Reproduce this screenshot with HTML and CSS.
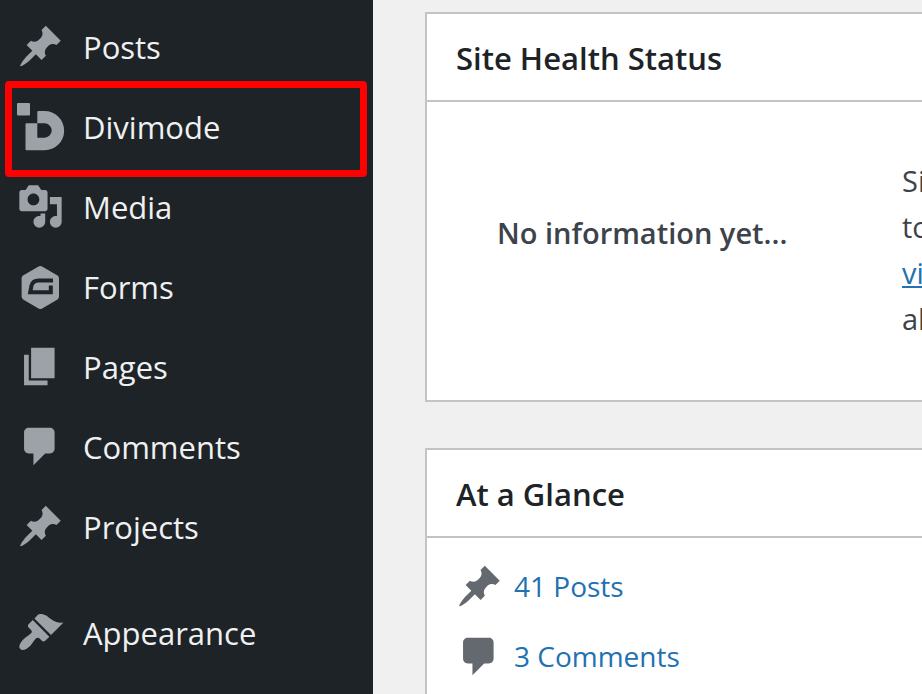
FILE: index.html
```
<!DOCTYPE html>
<html lang="en">
<head>
    <meta charset="UTF-8">
    <title>Dashboard</title>
    <link rel="stylesheet" href="styles.css">
</head>
<body>
    <!-- Shared icons -->
    <svg class="icon-defs" aria-hidden="true">
        <symbol id="icon-pin" viewBox="0 0 20 20">
            <path d="M10.44 3.02l1.82-1.82 6.36 6.35-1.83 1.82c-1.05-.68-2.48-.57-3.41.36l-.75.75c-.92.93-1.04 2.35-.35 3.41l-1.83 1.82-2.41-2.41-2.8 2.79c-.42.42-3.38 2.71-3.8 2.29s1.86-3.39 2.28-3.81l2.79-2.79L4.1 9.36l1.83-1.82c1.05.69 2.48.57 3.4-.36l.75-.75c.93-.92 1.05-2.35.36-3.41z"/>
        </symbol>
        <symbol id="icon-comment" viewBox="0 0 20 20">
            <path d="M5 2h9c1.1 0 2 .9 2 2v7c0 1.1-.9 2-2 2h-2l-5 5v-5H5c-1.1 0-2-.9-2-2V4c0-1.1.9-2 2-2z"/>
        </symbol>
    </svg>

    <nav class="admin-menu">
        <ul>
            <li><a href="#posts">
                <svg class="icon"><use href="#icon-pin"/></svg>
                <span>Posts</span>
            </a></li>
            <li class="highlight"><a href="#divimode">
                <svg class="icon" viewBox="0 0 47 47">
                    <rect x="0" y="0" width="13" height="12.5" rx="1"/>
                    <path fill-rule="evenodd" d="M21.3 8h6.2a19.6 19.6 0 0 1 0 39.3h-18a1 1 0 0 1-1-1V21.3a1 1 0 0 1 1-1h10.8V9a1 1 0 0 1 1-1zM20.3 20.3v14.4h7.2a7.2 7.2 0 0 0 0-14.4z"/>
                </svg>
                <span>Divimode</span>
            </a></li>
            <li><a href="#media">
                <svg class="icon" viewBox="0 0 20 20">
                    <path d="M13 11V4c0-.55-.45-1-1-1h-1.67L9 1H5L3.67 3H2c-.55 0-1 .45-1 1v7c0 .55.45 1 1 1h10c.55 0 1-.45 1-1zM7 4.5c1.38 0 2.5 1.12 2.5 2.5S8.38 9.5 7 9.5 4.5 8.38 4.5 7 5.62 4.5 7 4.5zM14 6h5v10.5c0 1.38-1.12 2.5-2.5 2.5S14 17.88 14 16.5s1.12-2.5 2.5-2.5c.17 0 .34.02.5.05V9h-3V6zm-4 8.05V13h2v3.5c0 1.38-1.12 2.5-2.5 2.5S7 17.88 7 16.5 8.12 14 9.5 14c.17 0 .34.02.5.05z"/>
                </svg>
                <span>Media</span>
            </a></li>
            <li><a href="#forms">
                <svg class="icon" viewBox="0 0 47 47">
                    <path d="M21.5 3.6q1.8-1 3.6 0l15 8.6q1.9 1.1 1.9 3.2v18.2q0 2.1-1.9 3.2l-15 8.6q-1.8 1-3.6 0l-15-8.6q-1.9-1.1-1.9-3.2V15.4q0-2.1 1.9-3.2z"/>
                    <path class="cutout" d="M36 17.5H21.5q-5.5 0-7 5l-1.3 6.7H33.8V22.5"/>
                </svg>
                <span>Forms</span>
            </a></li>
            <li><a href="#pages">
                <svg class="icon" viewBox="0 0 20 20">
                    <path d="M6 15V2h10v13H6zm-1 1h8v2H3V5h2v11z"/>
                </svg>
                <span>Pages</span>
            </a></li>
            <li><a href="#comments">
                <svg class="icon"><use href="#icon-comment"/></svg>
                <span>Comments</span>
            </a></li>
            <li><a href="#projects">
                <svg class="icon"><use href="#icon-pin"/></svg>
                <span>Projects</span>
            </a></li>
            <li class="group-start"><a href="#appearance">
                <svg class="icon" viewBox="0 0 20 20">
                    <path d="M14.48 11.06L7.41 3.99l1.5-1.5c.5-.56 2.3-.47 3.51.32 1.21.8 1.43 1.28 2.91 2.1 1.18.64 2.45 1.26 4.45.85zm-.71.71L6.7 4.7 4.93 6.47c-.39.39-.39 1.02 0 1.41l1.06 1.06c.39.39.39 1.03 0 1.42-.6.6-1.43 1.11-2.21 1.69-.35.26-.7.53-1.01.84C1.43 14.23.4 16.08 1.4 17.07c.99 1 2.84-.03 4.18-1.36.31-.31.58-.66.85-1.02.57-.78 1.08-1.61 1.69-2.21.39-.39 1.02-.39 1.41 0l1.06 1.06c.39.39 1.02.39 1.41 0z"/>
                </svg>
                <span>Appearance</span>
            </a></li>
        </ul>
    </nav>

    <main class="content">
        <section class="postbox">
            <h2>Site Health Status</h2>
            <div class="health">
                <p class="health-status">No information yet...</p>
                <p class="health-details">
                    Site health checks will automatically run periodically<br>
                    to gather information about your site. You can also<br>
                    <a href="#site-health">visit the Site Health screen</a> to gather information<br>
                    about your site now.
                </p>
            </div>
        </section>

        <section class="postbox">
            <h2>At a Glance</h2>
            <ul class="glance">
                <li><svg class="icon"><use href="#icon-pin"/></svg><a href="#all-posts">41 Posts</a></li>
                <li><svg class="icon"><use href="#icon-comment"/></svg><a href="#all-comments">3 Comments</a></li>
            </ul>
        </section>
    </main>
</body>
</html>
```
FILE: styles.css
```
* {
    box-sizing: border-box;
}

body {
    margin: 0;
    display: flex;
    min-height: 100vh;
    overflow: hidden;
    background-color: #f0f0f1;
    color: #3c434a;
    font-family: "Segoe UI", "Open Sans", "Noto Sans", sans-serif;
    font-size: 29px;
    line-height: 46px;
}

ul {
    margin: 0;
    padding: 0;
    list-style: none;
}

h2,
p {
    margin: 0;
}

.icon-defs {
    position: absolute;
    width: 0;
    height: 0;
}

.icon {
    flex: none;
    width: 47px;
    height: 47px;
    fill: #9ca2a7;
    overflow: visible;
}

.cutout {
    fill: none;
    stroke: #1d2327;
    stroke-width: 4;
}

/* Left menu */
.admin-menu {
    flex: none;
    width: 373px;
    padding-top: 8px;
    background-color: #1d2327;
}

.admin-menu a {
    display: flex;
    gap: 19px;
    height: 80px;
    padding: 15px 17px;
    color: #f0f0f1;
    font-size: 31px;
    text-decoration: none;
}

.admin-menu span {
    line-height: 48px;
}

.group-start {
    margin-top: 26px;
}

.highlight {
    position: relative;
}

.highlight::after {
    content: "";
    position: absolute;
    inset: -7px 6px -9px 5px;
    border: 7px solid #ff0000;
    border-radius: 4px;
    pointer-events: none;
}

/* Dashboard boxes */
.content {
    display: flex;
    flex: 1;
    flex-direction: column;
    gap: 46px;
    padding: 12px 0 0 52px;
}

.postbox {
    min-width: 1240px;
    border: 2px solid #c3c4c7;
    background-color: #fff;
}

.postbox h2 {
    height: 88px;
    padding: 0 29px;
    border-bottom: 2px solid #c3c4c7;
    color: #1d2327;
    font-size: 31px;
    font-weight: 600;
    line-height: 88px;
}

.health {
    display: grid;
    grid-template-columns: 405px 1fr;
    height: 298px;
    padding: 56px 0 0 70px;
}

.health-status {
    padding-top: 52px;
    font-weight: 600;
}

.health a,
.glance a {
    color: #2271b1;
}

.glance {
    padding: 13px 29px;
}

.glance li {
    display: flex;
    align-items: center;
    gap: 11px;
    height: 70px;
    font-size: 28px;
}

.glance .icon {
    fill: #646970;
}

.glance a {
    text-decoration: none;
}
```
